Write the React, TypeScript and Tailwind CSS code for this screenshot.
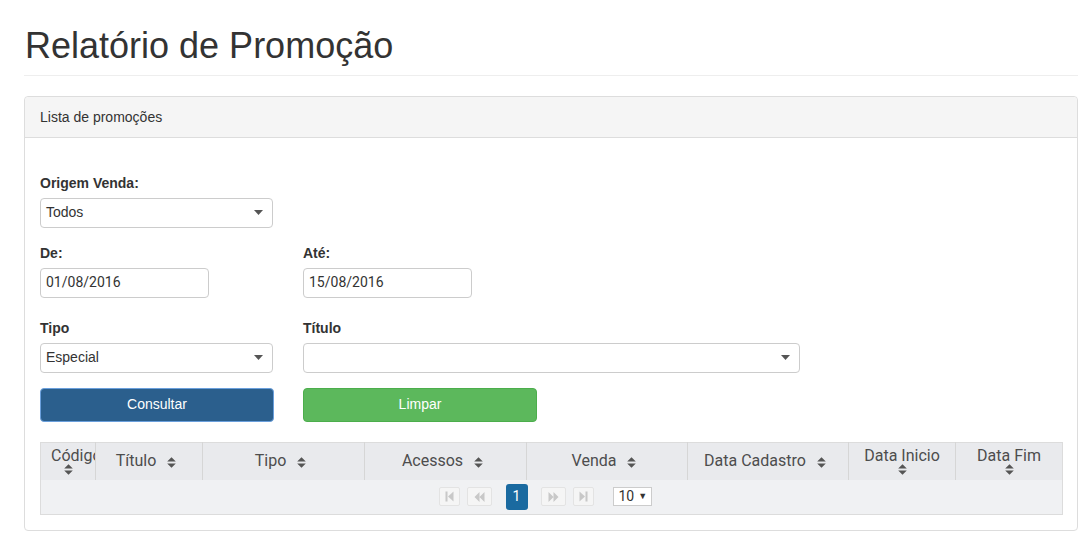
import React from "react";

const SortIcon = () => (
  <svg width="9" height="11" viewBox="0 0 9 11" className="inline-block align-middle">
    <path d="M4.5 0.3 L8.8 4.6 H0.2Z M0.2 6.4 H8.8 L4.5 10.7Z" fill="#555" />
  </svg>
);

const Caret = () => (
  <svg width="9" height="5" viewBox="0 0 9 5">
    <path d="M0 0 H9 L4.5 5Z" fill="#555" />
  </svg>
);

const FirstIcon = () => (
  <svg width="9" height="11" viewBox="0 0 9 11">
    <rect x="0.5" y="0.5" width="2" height="10" fill="#c8c8c8" />
    <path d="M8.5 0.5 V10.5 L3 5.5Z" fill="#c8c8c8" />
  </svg>
);
const LastIcon = () => (
  <svg width="9" height="11" viewBox="0 0 9 11">
    <rect x="6.5" y="0.5" width="2" height="10" fill="#c8c8c8" />
    <path d="M0.5 0.5 V10.5 L6 5.5Z" fill="#c8c8c8" />
  </svg>
);
const PrevIcon = () => (
  <svg width="11" height="10" viewBox="0 0 11 10">
    <path d="M5.5 0 V10 L0.5 5Z M10.5 0 V10 L5.5 5Z" fill="#c8c8c8" />
  </svg>
);
const NextIcon = () => (
  <svg width="11" height="10" viewBox="0 0 11 10">
    <path d="M0.5 0 V10 L5.5 5Z M5.5 0 V10 L10.5 5Z" fill="#c8c8c8" />
  </svg>
);

const cols: { label: string; w: number; stack?: boolean }[] = [
  { label: "Código", w: 55, stack: true },
  { label: "Título", w: 107 },
  { label: "Tipo", w: 162 },
  { label: "Acessos", w: 162 },
  { label: "Venda", w: 161 },
  { label: "Data Cadastro", w: 161 },
  { label: "Data Inicio", w: 107, stack: true },
  { label: "Data Fim", w: 107, stack: true },
];

function Label({ children }: { children: React.ReactNode }) {
  return <div className="mb-[5px] h-[20px] text-[14px] font-bold leading-[20px] text-[#333]">{children}</div>;
}

function Select({ value, w }: { value: string; w: string }) {
  return (
    <div className={`${w} flex h-[30px] items-center justify-between rounded-[4px] border border-[#ccc] bg-white pl-[5px] pr-[9px] text-[14px] text-[#333]`}>
      <span>{value}</span>
      <Caret />
    </div>
  );
}

function Input({ value }: { value: string }) {
  return (
    <div className="flex h-[30px] w-[169px] items-center rounded-[4px] border border-[#ccc] bg-white pl-[5px] font-['Roboto',sans-serif] text-[14px] text-[#333]">
      {value}
    </div>
  );
}

export default function App() {
  return (
    <div className="min-h-[542px] bg-white pl-[24px] pr-[12px] pt-[26px] font-['Liberation_Sans',Arial,sans-serif] text-[#333]">
      <h1 className="border-b border-[#eee] pb-[9px] pl-px text-[36px] font-normal leading-[1.1] text-[#333]">
        Relatório de Promoção
      </h1>

      <div className="mt-[20px] rounded-[4px] border border-[#ddd] bg-white">
        <div className="rounded-t-[4px] border-b border-[#ddd] bg-[#f5f5f5] px-[15px] py-[10px] text-[14px] leading-[20px] text-[#333]">
          Lista de promoções
        </div>

        <div className="px-[15px] pb-[15px] pt-[35px]">
          <div>
            <Label>Origem Venda:</Label>
            <Select value="Todos" w="w-[233px]" />
          </div>

          <div className="mt-[15px] flex">
            <div className="w-[263px]">
              <Label>De:</Label>
              <Input value="01/08/2016" />
            </div>
            <div>
              <Label>Até:</Label>
              <Input value="15/08/2016" />
            </div>
          </div>

          <div className="mt-[20px] flex">
            <div className="w-[263px]">
              <Label>Tipo</Label>
              <Select value="Especial" w="w-[233px]" />
            </div>
            <div>
              <Label>Título</Label>
              <Select value="" w="w-[497px]" />
            </div>
          </div>

          <div className="mt-[15px] flex">
            <div className="w-[263px]">
              <button className="h-[34px] w-[234px] rounded-[4px] border border-[#6a9fdc] bg-[#2b5f8d] text-[14px] text-white">
                Consultar
              </button>
            </div>
            <button className="h-[34px] w-[234px] rounded-[4px] border border-[#4cae4c] bg-[#5cb85c] text-[14px] text-white">
              Limpar
            </button>
          </div>

          <table className="mt-[20px] w-full table-fixed border-collapse border border-[#dcdcdc] font-['Roboto',sans-serif]">
            <colgroup>
              {cols.map((c) => (
                <col key={c.label} style={{ width: c.w }} />
              ))}
            </colgroup>
            <thead>
              <tr className="h-[38px] bg-[#e9eaed]">
                {cols.map((c, i) => (
                  <th
                    key={c.label}
                    className={`overflow-hidden whitespace-nowrap text-center align-middle text-[16px] font-normal leading-[14px] text-[#4d4d4d] ${c.stack ? "px-[10px]" : "pl-[10px] pr-[16px]"} ${i > 0 ? "border-l border-[#d6d6d6]" : ""}`}
                  >
                    {c.stack ? (
                      <>
                        <div className="leading-[15px]">{c.label}</div>
                        <div className="leading-[11px]">
                          <SortIcon />
                        </div>
                      </>
                    ) : (
                      <span>
                        {c.label}
                        <span className="ml-[11px]">
                          <SortIcon />
                        </span>
                      </span>
                    )}
                  </th>
                ))}
              </tr>
            </thead>
            <tbody>
              <tr className="h-[34px] bg-[#f0f1f3]">
                <td colSpan={8} className="p-0">
                  <div className="flex items-center justify-center pr-[13px]">
                    <div className="flex h-[19px] w-[21px] items-center justify-center rounded-[2px] border border-[#e3e3e3] bg-[#f5f5f5]">
                      <FirstIcon />
                    </div>
                    <div className="ml-[7px] flex h-[19px] w-[25px] items-center justify-center rounded-[2px] border border-[#e3e3e3] bg-[#f5f5f5]">
                      <PrevIcon />
                    </div>
                    <div className="ml-[14px] flex h-[26px] w-[22px] items-center justify-center rounded-[3px] bg-[#1a6aa0] text-[14px] text-white">
                      1
                    </div>
                    <div className="ml-[13px] flex h-[19px] w-[25px] items-center justify-center rounded-[2px] border border-[#e3e3e3] bg-[#f5f5f5]">
                      <NextIcon />
                    </div>
                    <div className="ml-[7px] flex h-[19px] w-[21px] items-center justify-center rounded-[2px] border border-[#e3e3e3] bg-[#f5f5f5]">
                      <LastIcon />
                    </div>
                    <div className="ml-[19px] flex h-[19px] w-[39px] items-center gap-[4px] border border-[#ccc] bg-white pl-[5px] text-[14px] text-[#333]">
                      <span>10</span>
                      <span className="text-[9px]">▼</span>
                    </div>
                  </div>
                </td>
              </tr>
            </tbody>
          </table>
        </div>
      </div>
    </div>
  );
}
